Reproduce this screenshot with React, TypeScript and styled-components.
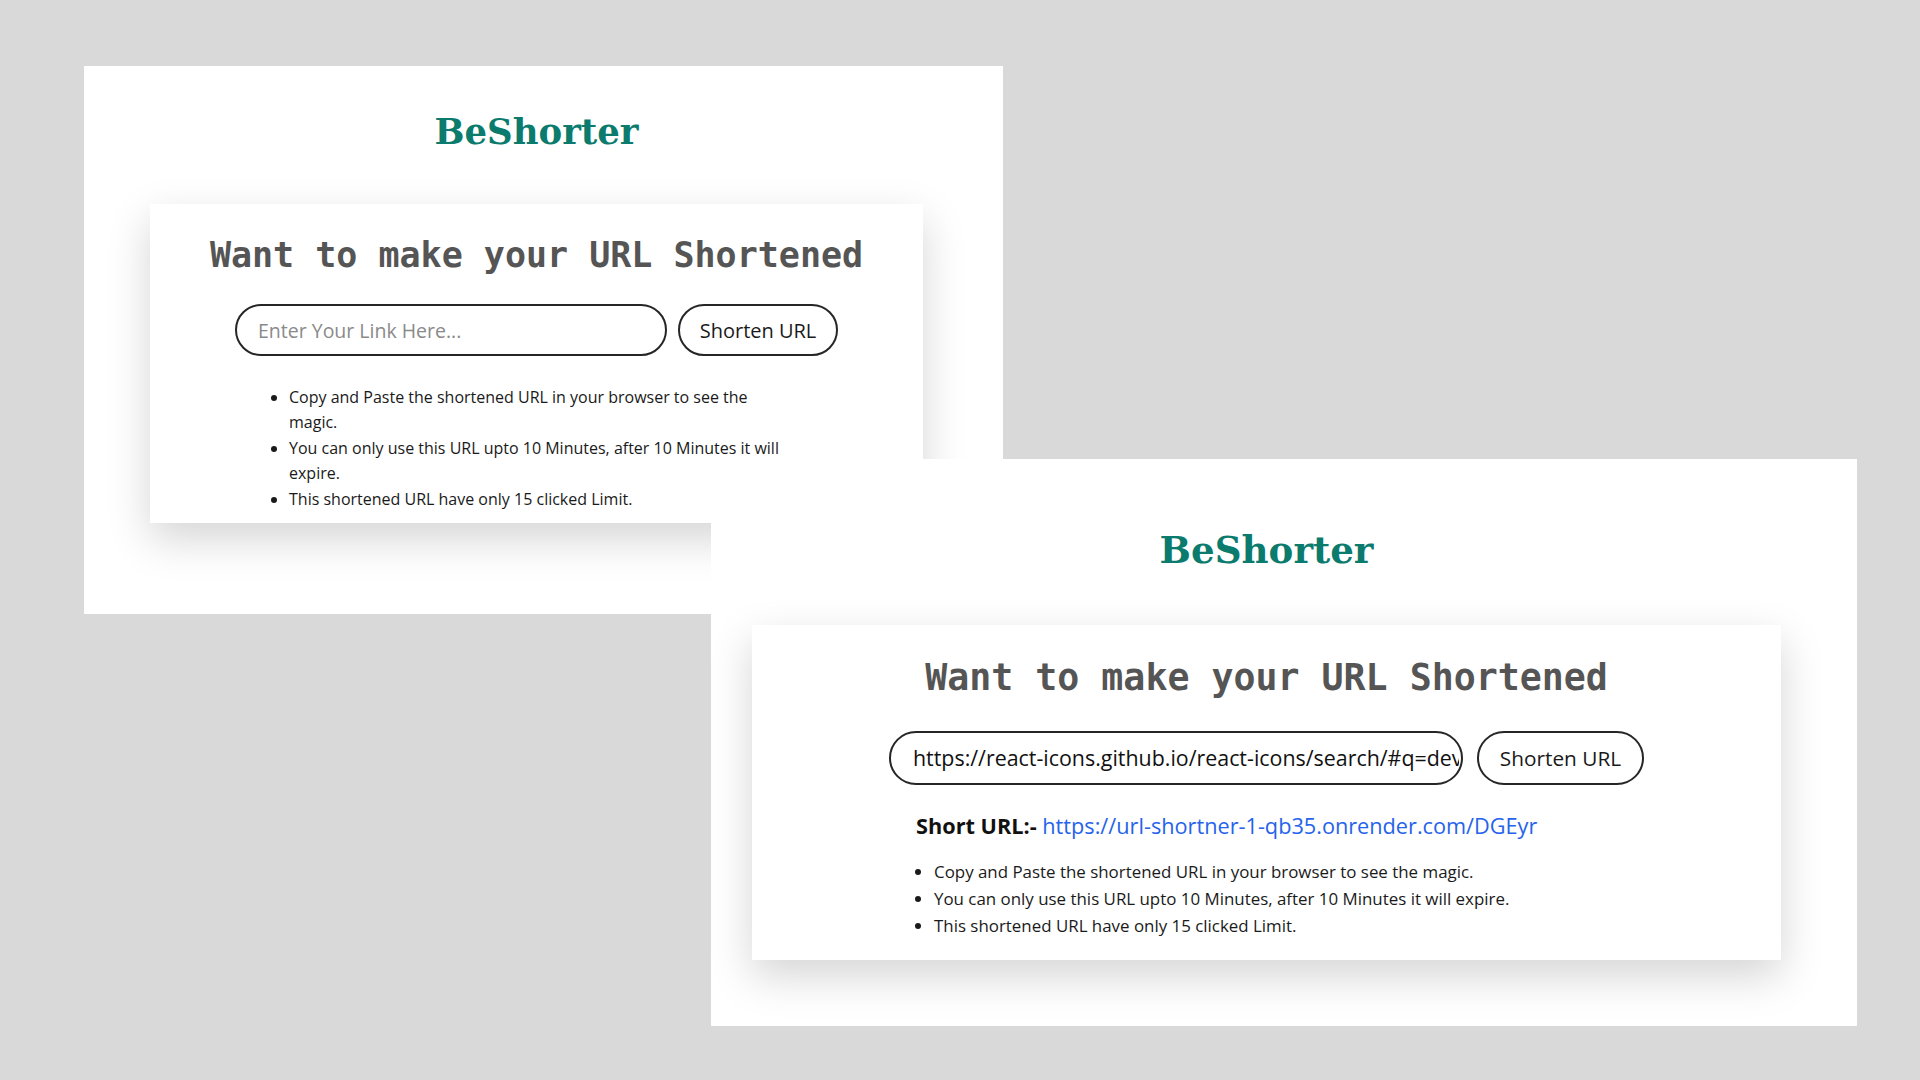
import React from "react";
import styled, { createGlobalStyle } from "styled-components";

const GlobalStyle = createGlobalStyle`
  html, body {
    margin: 0;
    padding: 0;
    background: #d9d9d9;
  }
  body {
    width: 1920px;
    height: 1080px;
    overflow: hidden;
    font-family: "Open Sans", "Noto Sans", sans-serif;
  }
`;

type ShortInfo = { font: number; line: number; gapTop: number; left: number; url: string };

type Variant = {
  x: number;
  y: number;
  w: number;
  h: number;
  padTop: number;
  padLeft: number;
  cardW: number;
  brandSize: number;
  brandGap: number;
  cardPadTop: number;
  cardPadBottom: number;
  headSize: number;
  headGap: number;
  rowH: number;
  inputW: number;
  btnW: number;
  rowGap: number;
  inputFont: number;
  btnFont: number;
  inputPadL: number;
  value: string;
  listFont: number;
  listLine: number;
  listGap: number;
  listLeft: number;
  listW: number;
  short?: ShortInfo;
};

const Desktop = styled.div`
  position: relative;
  width: 1920px;
  height: 1080px;
  background: #d9d9d9;
  overflow: hidden;
`;

const Window = styled.section<{ $x: number; $y: number; $w: number; $h: number; $padTop: number; $padLeft: number }>`
  position: absolute;
  left: ${(p) => p.$x}px;
  top: ${(p) => p.$y}px;
  width: ${(p) => p.$w}px;
  height: ${(p) => p.$h}px;
  box-sizing: border-box;
  padding: ${(p) => p.$padTop}px 0 0 ${(p) => p.$padLeft}px;
  background: #ffffff;
  overflow: hidden;
`;

const Column = styled.div<{ $w: number }>`
  width: ${(p) => p.$w}px;
  display: flex;
  flex-direction: column;
`;

const Brand = styled.h1<{ $size: number; $gap: number }>`
  margin: 0 0 ${(p) => p.$gap}px;
  font-family: "DejaVu Serif", "Liberation Serif", serif;
  font-weight: 700;
  font-size: ${(p) => p.$size}px;
  line-height: 1;
  color: #0b7b6d;
  text-align: center;
`;

const Card = styled.main<{ $padTop: number; $padBottom: number }>`
  display: flex;
  flex-direction: column;
  padding: ${(p) => p.$padTop}px 0 ${(p) => p.$padBottom}px;
  background: #ffffff;
  box-shadow: 0 16px 40px rgba(0, 0, 0, 0.17);
`;

const Heading = styled.h2<{ $size: number; $gap: number }>`
  margin: 0 0 ${(p) => p.$gap}px;
  font-family: "DejaVu Sans Mono", "Liberation Mono", monospace;
  font-weight: 700;
  font-size: ${(p) => p.$size}px;
  line-height: 1;
  color: #555555;
  text-align: center;
  white-space: nowrap;
`;

const Form = styled.form<{ $h: number; $gap: number }>`
  display: flex;
  justify-content: center;
  gap: ${(p) => p.$gap}px;
  height: ${(p) => p.$h}px;
  margin: 0;
`;

const UrlInput = styled.input<{ $w: number; $font: number; $padL: number }>`
  box-sizing: border-box;
  width: ${(p) => p.$w}px;
  height: 100%;
  padding: 0 2px 0 ${(p) => p.$padL}px;
  border: 2px solid #262626;
  border-radius: 999px;
  background: #ffffff;
  font-family: "Open Sans", "Noto Sans", sans-serif;
  font-size: ${(p) => p.$font}px;
  color: #111111;
  outline: none;
  &::placeholder {
    color: #8a8a8a;
  }
`;

const ShortenButton = styled.button<{ $w: number; $font: number }>`
  box-sizing: border-box;
  width: ${(p) => p.$w}px;
  height: 100%;
  padding: 0;
  border: 2px solid #262626;
  border-radius: 999px;
  background: #ffffff;
  font-family: "Open Sans", "Noto Sans", sans-serif;
  font-size: ${(p) => p.$font}px;
  color: #1a1a1a;
  cursor: pointer;
`;

const ShortLine = styled.p<{ $font: number; $line: number; $gapTop: number; $left: number }>`
  margin: ${(p) => p.$gapTop}px 0 0 ${(p) => p.$left}px;
  font-family: "Open Sans", "Noto Sans", sans-serif;
  font-size: ${(p) => p.$font}px;
  line-height: ${(p) => p.$line}px;
  color: #111111;
  white-space: nowrap;
`;

const ShortLabel = styled.strong`
  font-weight: 700;
`;

const ShortLink = styled.a`
  color: #2563eb;
  text-decoration: none;
`;

const Tips = styled.ul<{ $font: number; $line: number; $gapTop: number; $left: number; $w: number }>`
  margin: ${(p) => p.$gapTop}px 0 0 ${(p) => p.$left}px;
  padding: 0 0 0 20px;
  width: ${(p) => p.$w}px;
  font-family: "Open Sans", "Noto Sans", sans-serif;
  font-size: ${(p) => p.$font}px;
  line-height: ${(p) => p.$line}px;
  color: #1a1a1a;
`;

const Tip = styled.li`
  margin: 0;
`;

const tips = [
  "Copy and Paste the shortened URL in your browser to see the magic.",
  "You can only use this URL upto 10 Minutes, after 10 Minutes it will expire.",
  "This shortened URL have only 15 clicked Limit.",
];

const variants: Variant[] = [
  {
    x: 84,
    y: 66,
    w: 919,
    h: 548,
    padTop: 48,
    padLeft: 66,
    cardW: 773,
    brandSize: 35.5,
    brandGap: 54.5,
    cardPadTop: 34,
    cardPadBottom: 11,
    headSize: 35,
    headGap: 31,
    rowH: 52,
    inputW: 432,
    btnW: 160,
    rowGap: 11,
    inputFont: 19.5,
    btnFont: 20,
    inputPadL: 21,
    value: "",
    listFont: 16,
    listLine: 25.4,
    listGap: 29,
    listLeft: 119,
    listW: 504,
  },
  {
    x: 711,
    y: 459,
    w: 1146,
    h: 567,
    padTop: 73,
    padLeft: 41,
    cardW: 1029,
    brandSize: 37.2,
    brandGap: 56.2,
    cardPadTop: 35,
    cardPadBottom: 20,
    headSize: 36.6,
    headGap: 34,
    rowH: 54,
    inputW: 574,
    btnW: 167,
    rowGap: 14,
    inputFont: 21.4,
    btnFont: 20.8,
    inputPadL: 22,
    value: "https://react-icons.github.io/react-icons/search/#q=dev",
    listFont: 16.9,
    listLine: 26.9,
    listGap: 18,
    listLeft: 162,
    listW: 720,
    short: {
      font: 21.7,
      line: 30,
      gapTop: 26,
      left: 164,
      url: "https://url-shortner-1-qb35.onrender.com/DGEyr",
    },
  },
];

function Shot({ v }: { v: Variant }) {
  return (
    <Window $x={v.x} $y={v.y} $w={v.w} $h={v.h} $padTop={v.padTop} $padLeft={v.padLeft}>
      <Column $w={v.cardW}>
        <Brand $size={v.brandSize} $gap={v.brandGap}>
          BeShorter
        </Brand>
        <Card $padTop={v.cardPadTop} $padBottom={v.cardPadBottom}>
          <Heading $size={v.headSize} $gap={v.headGap}>
            Want to make your URL Shortened
          </Heading>
          <Form $h={v.rowH} $gap={v.rowGap} onSubmit={(e) => e.preventDefault()}>
            <UrlInput
              $w={v.inputW}
              $font={v.inputFont}
              $padL={v.inputPadL}
              type="text"
              placeholder="Enter Your Link Here..."
              defaultValue={v.value}
            />
            <ShortenButton $w={v.btnW} $font={v.btnFont} type="submit">
              Shorten URL
            </ShortenButton>
          </Form>
          {v.short && (
            <ShortLine $font={v.short.font} $line={v.short.line} $gapTop={v.short.gapTop} $left={v.short.left}>
              <ShortLabel>Short URL:-</ShortLabel> <ShortLink href="#">{v.short.url}</ShortLink>
            </ShortLine>
          )}
          <Tips $font={v.listFont} $line={v.listLine} $gapTop={v.listGap} $left={v.listLeft} $w={v.listW}>
            {tips.map((t) => (
              <Tip key={t}>{t}</Tip>
            ))}
          </Tips>
        </Card>
      </Column>
    </Window>
  );
}

export default function App() {
  return (
    <>
      <GlobalStyle />
      <Desktop>
        {variants.map((v) => (
          <Shot key={v.x} v={v} />
        ))}
      </Desktop>
    </>
  );
}
